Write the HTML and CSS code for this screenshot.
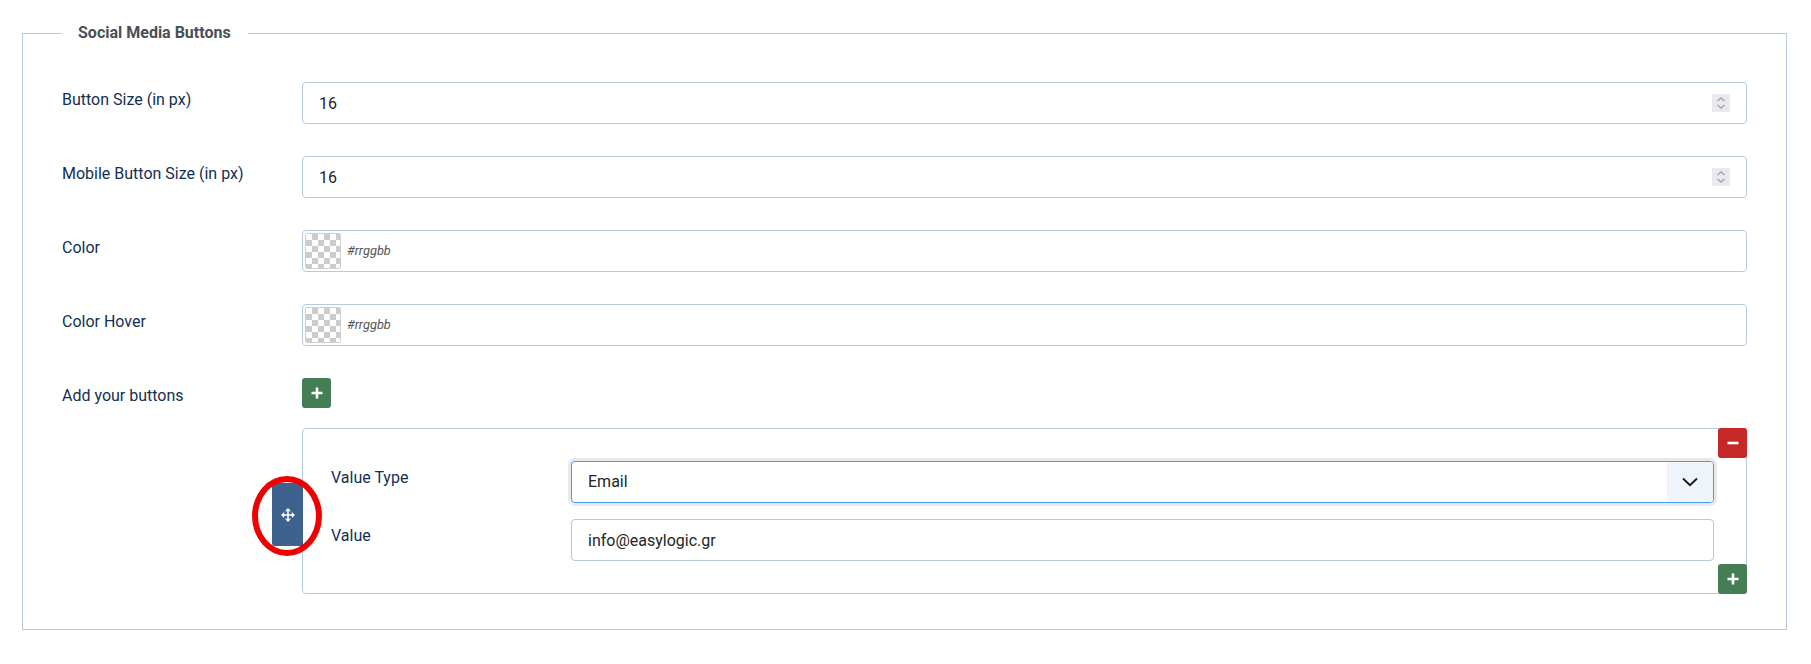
FILE: index.html
```html
<!DOCTYPE html>
<html lang="en">
<head>
<meta charset="utf-8">
<title>Social Media Buttons</title>
<link rel="stylesheet" href="styles.css">
</head>
<body>
<fieldset class="panel">
  <legend class="panel-title">Social Media Buttons</legend>
  <div class="row">
    <label class="row-label">Button Size (in px)</label>
    <div class="field">
      <input class="field-input" type="text" value="16">
      <span class="spinner"><svg width="10" height="14" viewBox="0 0 10 14"><path d="M1.500 5 5 2l3.500 3M1.500 9 5 12l3.500-3" fill="none" stroke="#a3a3ad" stroke-width="1.400"/></svg></span>
    </div>
  </div>
  <div class="row">
    <label class="row-label">Mobile Button Size (in px)</label>
    <div class="field">
      <input class="field-input" type="text" value="16">
      <span class="spinner"><svg width="10" height="14" viewBox="0 0 10 14"><path d="M1.500 5 5 2l3.500 3M1.500 9 5 12l3.500-3" fill="none" stroke="#a3a3ad" stroke-width="1.400"/></svg></span>
    </div>
  </div>
  <div class="row">
    <label class="row-label">Color</label>
    <div class="field field-color">
      <span class="swatch"></span>
      <input class="color-input" type="text" placeholder="#rrggbb">
    </div>
  </div>
  <div class="row">
    <label class="row-label">Color Hover</label>
    <div class="field field-color">
      <span class="swatch"></span>
      <input class="color-input" type="text" placeholder="#rrggbb">
    </div>
  </div>
  <div class="row row-add">
    <label class="row-label">Add your buttons</label>
    <button class="btn btn-add" type="button"><svg width="12" height="12" viewBox="0 0 12 12"><path d="M6 .5v11M.5 6h11" stroke="#fff" stroke-width="2.600"/></svg></button>
  </div>
  <div class="repeat">
    <div class="repeat-box">
      <span class="handle"><svg width="14" height="14" viewBox="0 0 14 14"><path d="M7 0l3 3.200H7.800v3h3V4L14 7l-3.200 3V7.800h-3v3H10L7 14l-3-3.200h2.200v-3h-3V10L0 7l3.200-3v2.200h3v-3H4z" fill="#fff"/></svg></span>
      <span class="ring"></span>
      <button class="btn btn-remove" type="button"><svg width="12" height="12" viewBox="0 0 12 12"><path d="M.5 6h11" stroke="#fff" stroke-width="2.600"/></svg></button>
      <div class="sub-row">
        <label class="sub-label">Value Type</label>
        <div class="select">
          <select class="select-input"><option>Email</option></select>
          <span class="select-arrow"><svg width="16" height="10" viewBox="0 0 16 10"><path d="M1 1.500 8 8.200l7-6.700" fill="none" stroke="#1a1a1a" stroke-width="1.900"/></svg></span>
        </div>
      </div>
      <div class="sub-row">
        <label class="sub-label">Value</label>
        <div class="field"><input class="field-input" type="text" value="info@easylogic.gr"></div>
      </div>
      <button class="btn btn-append" type="button"><svg width="12" height="12" viewBox="0 0 12 12"><path d="M6 .5v11M.5 6h11" stroke="#fff" stroke-width="2.600"/></svg></button>
    </div>
  </div>
</fieldset>
</body>
</html>
```
FILE: styles.css
```css
* { box-sizing: border-box; }
html, body { margin: 0; padding: 0; background: #fff; }
body {
  height: 664px;
  overflow: hidden;
  padding: 23px 24px 0 22px;
  font-family: Roboto, "Liberation Sans", sans-serif;
  font-size: 16px;
  color: #132f53;
}
.panel {
  margin: 0;
  min-width: 0;
  border: 1px solid #b7c8e0;
  padding: 39px 39px 35px;
}
.panel-title {
  padding: 0 17px 0 16px;
  height: 20px;
  line-height: 20px;
  font-size: 16px;
  font-weight: 700;
  color: #495057;
}
.row { display: flex; margin-bottom: 32px; }
.row-label { width: 240px; flex: none; line-height: 20px; padding-top: 8px; }
.row-add { margin-bottom: 20px; height: 30px; }
.field {
  flex: 1;
  min-width: 0;
  height: 42px;
  display: flex;
  align-items: center;
  border: 1px solid #b7c8e0;
  border-radius: 4px;
  background: #fff;
}
.field-input {
  flex: 1;
  min-width: 0;
  height: 100%;
  border: 0;
  outline: 0;
  background: transparent;
  padding: 0 16px;
  font: 16px Roboto, "Liberation Sans", sans-serif;
  color: #212529;
}
.spinner {
  flex: none;
  width: 18px;
  height: 18px;
  margin-right: 16px;
  background: #e9e9ee;
  display: flex;
  align-items: center;
  justify-content: center;
}
.field-color { padding-left: 2px; }
.swatch {
  flex: none;
  width: 36px;
  height: 36px;
  border: 1px solid #cfcfcf;
  border-radius: 2px;
  background-color: #fff;
  background-image:
    linear-gradient(45deg, #ccc 25%, transparent 25%, transparent 75%, #ccc 75%),
    linear-gradient(45deg, #ccc 25%, transparent 25%, transparent 75%, #ccc 75%);
  background-size: 12px 12px;
  background-position: 0 0, 6px 6px;
}
.color-input {
  flex: 1;
  min-width: 0;
  height: 100%;
  border: 0;
  outline: 0;
  background: transparent;
  padding: 0 6px 2px;
  font: italic 12.8px Roboto, "Liberation Sans", sans-serif;
}
.color-input::placeholder { color: #555; opacity: 1; }
.btn {
  width: 29px;
  height: 30px;
  padding: 0;
  border: 0;
  border-radius: 3px;
  display: flex;
  align-items: center;
  justify-content: center;
}
.btn-add, .btn-append { background: #457d54; }
.btn-remove { background: #c52827; }
.repeat { padding-left: 240px; }
.repeat-box {
  position: relative;
  height: 166px;
  border: 1px solid #b7c8e0;
  border-radius: 4px;
  padding: 32px 32px 0 28px;
}
.btn-remove { position: absolute; top: -1px; right: -1px; }
.btn-append { position: absolute; bottom: -1px; right: -1px; }
.handle {
  position: absolute;
  left: -31px;
  top: 54px;
  width: 31px;
  height: 63px;
  background: #3d628d;
  border-radius: 3px 0 0 3px;
  display: flex;
  align-items: center;
  justify-content: center;
}
.ring {
  position: absolute;
  left: -51px;
  top: 47px;
  width: 70px;
  height: 80px;
  border: 6px solid #f00000;
  border-radius: 50%;
}
.sub-row { display: flex; margin-bottom: 16px; }
.sub-label { width: 240px; flex: none; line-height: 20px; padding-top: 7px; }
.select {
  flex: 1;
  min-width: 0;
  height: 42px;
  display: flex;
  border: 1px solid #4a97f5;
  border-radius: 4px;
  box-shadow: 0 0 0 3px #e9e9e9;
  background: #fff;
  overflow: hidden;
}
.select-input {
  flex: 1;
  min-width: 0;
  appearance: none;
  border: 0;
  outline: 0;
  background: transparent;
  padding: 0 16px 2px;
  font: 16px Roboto, "Liberation Sans", sans-serif;
  color: #212529;
}
.select-arrow {
  flex: none;
  width: 46px;
  background: #eff3fa;
  display: flex;
  align-items: center;
  justify-content: center;
}
```
